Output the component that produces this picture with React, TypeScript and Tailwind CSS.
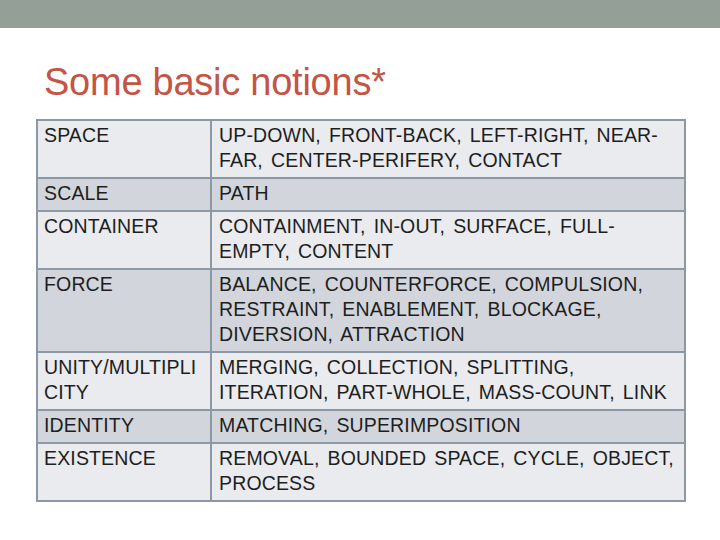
const rows = [
  { k: "SPACE", v: ["UP-DOWN, FRONT-BACK, LEFT-RIGHT, NEAR-", "FAR, CENTER-PERIFERY, CONTACT"] },
  { k: "SCALE", v: ["PATH"] },
  { k: "CONTAINER", v: ["CONTAINMENT, IN-OUT, SURFACE, FULL-", "EMPTY, CONTENT"] },
  { k: "FORCE", v: ["BALANCE, COUNTERFORCE, COMPULSION,", "RESTRAINT, ENABLEMENT, BLOCKAGE,", "DIVERSION, ATTRACTION"] },
  { k: "UNITY/MULTIPLI\nCITY", v: ["MERGING, COLLECTION, SPLITTING,", "ITERATION, PART-WHOLE, MASS-COUNT, LINK"] },
  { k: "IDENTITY", v: ["MATCHING, SUPERIMPOSITION"] },
  { k: "EXISTENCE", v: ["REMOVAL, BOUNDED SPACE, CYCLE, OBJECT,", "PROCESS"] },
];

export default function App() {
  return (
    <div className="w-[720px] h-[540px] bg-white overflow-hidden" style={{ fontFamily: '"Liberation Sans", Arial, sans-serif' }}>
      <div className="h-[28px] bg-[#939f97]" />
      <h1 className="ml-[44px] mt-[30px] text-[38px] leading-[48px] text-[#c35446] tracking-[-0.25px]">Some basic notions*</h1>
      <div className="ml-[36px] mt-[13px] w-[650px] grid grid-cols-[172px_1fr] gap-[2px] p-[2px] bg-[#8d98a5] text-[19.5px] leading-[25px] tracking-[0.15px] [word-spacing:2.5px] text-[#1e1e1e]">
        {rows.map((r, i) => {
          const bg = i % 2 === 0 ? "bg-[#e9ebee]" : "bg-[#d2d6dc]";
          return [
            <div key={r.k} className={`${bg} pl-[6px] pt-[2px] pb-[4px] whitespace-pre`}>{r.k}</div>,
            <div key={r.k + "v"} className={`${bg} pl-[7px] pt-[2px] pb-[4px]`}>
              {r.v.map((l) => (
                <div key={l} className="whitespace-nowrap">{l}</div>
              ))}
            </div>,
          ];
        })}
      </div>
    </div>
  );
}
